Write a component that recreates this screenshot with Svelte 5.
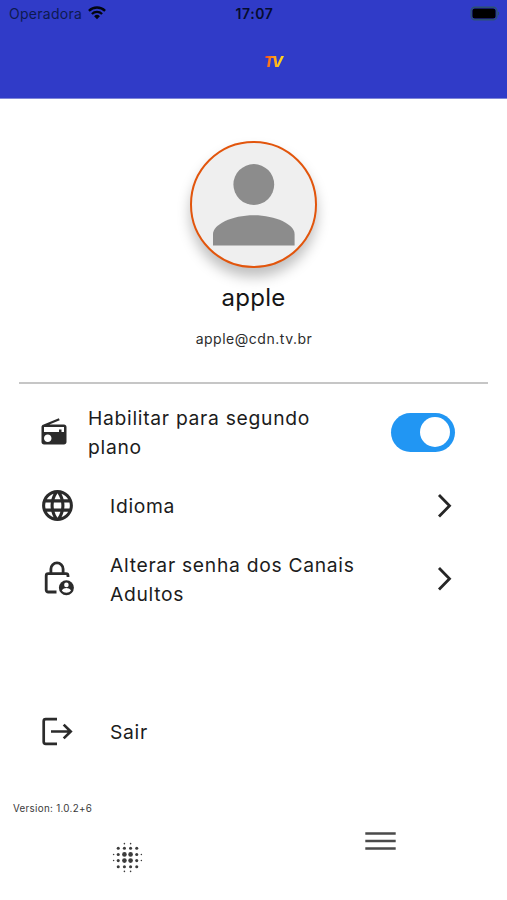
<script>
  let background = true;

  const user = { name: "apple", email: "apple@cdn.tv.br" };

  const dots = [];
  for (const x of [6, 10, 14, 18]) {
    for (const y of [6, 10, 14, 18]) {
      const inner = x > 6 && x < 18 && y > 6 && y < 18;
      dots.push({ x, y, r: inner ? 1.5 : 1 });
    }
  }
  for (const p of [10, 14]) {
    for (const e of [3, 21]) {
      dots.push({ x: p, y: e, r: 0.5 }, { x: e, y: p, r: 0.5 });
    }
  }
</script>

{#snippet chevron()}
  <svg class="chevron" width="18" height="26" viewBox="0 0 18 26">
    <path d="M3 2 13.5 12.8 3 23.6" fill="none" stroke="#262626" stroke-width="2.8" />
  </svg>
{/snippet}

<div class="screen">
  <header>
    <div class="status">
      <div class="carrier">
        <span>Operadora</span>
        <svg width="18" height="14" viewBox="0 0 18 14">
          <g fill="none" stroke="#02050f" stroke-width="2.3">
            <path d="M.9 4.9a11.4 11.4 0 0 1 16.2 0" />
            <path d="M3.9 8a7.2 7.2 0 0 1 10.2 0" />
          </g>
          <path d="M9 13.3 6.1 10.3a4.1 4.1 0 0 1 5.8 0z" fill="#02050f" />
        </svg>
      </div>
      <span class="time">17:07</span>
      <svg class="battery" width="30" height="16" viewBox="0 0 30 16">
        <rect x="1.2" y="1.2" width="25.6" height="12.6" rx="3.6" fill="none" stroke="#2c526f" stroke-width="1.4" />
        <rect x="2.4" y="2.4" width="23.2" height="10.2" rx="2.5" fill="#000" />
        <path d="M28 5.5v4c1.7-.6 1.7-3.4 0-4z" fill="#2c526f" />
      </svg>
    </div>
    <div class="brand">TV</div>
  </header>

  <section class="profile">
    <div class="avatar">
      <svg width="123" height="123" viewBox="0 0 123 123" fill="#8c8c8c">
        <circle cx="61.8" cy="41.5" r="20.4" />
        <path d="M21 102.5V91C21 81.5 39.8 72.2 61.8 72.2s40.8 9.3 40.8 18.8v11.5z" />
      </svg>
    </div>
    <h1>{user.name}</h1>
    <p>{user.email}</p>
  </section>

  <hr />

  <div class="list">
    <div class="row compact">
      <svg class="icon" width="30" height="30" viewBox="0 0 24 24">
        <path d="M3.24 6.15C2.51 6.43 2 7.17 2 8v12c0 1.1.89 2 2 2h16c1.11 0 2-.9 2-2V8c0-1.11-.89-2-2-2H8.3l8.26-3.34L15.88 1 3.24 6.15zM7 20c-1.66 0-3-1.34-3-3s1.34-3 3-3 3 1.34 3 3-1.34 3-3 3zm13-8h-2v-2h-2v2H4V8h16v4z" />
      </svg>
      <span class="label">Habilitar para segundo plano</span>
      <button
        class="switch"
        class:on={background}
        aria-label="Habilitar para segundo plano"
        on:click={() => (background = !background)}
      ></button>
    </div>

    <div class="row">
      <svg class="icon" width="37" height="37" viewBox="0 0 24 24">
        <path d="M11.99 2C6.47 2 2 6.48 2 12s4.47 10 9.99 10C17.52 22 22 17.52 22 12S17.52 2 11.99 2zm6.93 6h-2.95c-.32-1.25-.78-2.45-1.38-3.56 1.84.63 3.37 1.91 4.33 3.56zM12 4.04c.83 1.2 1.48 2.53 1.91 3.96h-3.82c.43-1.43 1.08-2.76 1.91-3.96zM4.26 14C4.1 13.36 4 12.69 4 12s.1-1.36.26-2h3.38c-.08.66-.14 1.32-.14 2s.06 1.34.14 2H4.26zm.82 2h2.95c.32 1.25.78 2.45 1.38 3.56-1.84-.63-3.37-1.9-4.33-3.56zm2.95-8H5.08c.96-1.66 2.49-2.93 4.33-3.56C8.81 5.55 8.35 6.75 8.03 8zM12 19.96c-.83-1.2-1.48-2.53-1.91-3.96h3.82c-.43 1.43-1.08 2.76-1.91 3.96zM14.34 14H9.66c-.09-.66-.16-1.32-.16-2s.07-1.35.16-2h4.68c.09.65.16 1.32.16 2s-.07 1.34-.16 2zm.25 5.56c.6-1.11 1.06-2.31 1.38-3.56h2.95c-.96 1.65-2.49 2.93-4.33 3.56zM16.36 14c.08-.66.14-1.32.14-2s-.06-1.34-.14-2h3.38c.16.64.26 1.31.26 2s-.1 1.36-.26 2h-3.38z" />
      </svg>
      <span class="label">Idioma</span>
      {@render chevron()}
    </div>

    <div class="row">
      <svg class="icon" width="37" height="37" viewBox="0 0 37 37">
        <g fill="none" stroke="#2b2b2b" stroke-width="2.8">
          <path d="M11.9 13.5V9a6.1 6.1 0 0 1 12.2 0v4.5" />
          <path d="M17.5 32H9.2a2 2 0 0 1-2-2V15.7a2 2 0 0 1 2-2H27a2 2 0 0 1 2 2V17" />
        </g>
        <circle cx="27.4" cy="27.8" r="7.5" />
        <circle cx="27.4" cy="24.9" r="2.3" fill="#fff" />
        <path d="M22.8 30.5c1.2-1.7 3-2.4 4.6-2.4s3.4.7 4.6 2.4c-2.2 2.9-7 2.9-9.2 0z" fill="#fff" />
      </svg>
      <span class="label">Alterar senha dos Canais Adultos</span>
      {@render chevron()}
    </div>

    <div class="row logout">
      <svg class="icon" width="37" height="37" viewBox="0 0 37 37">
        <g fill="none" stroke="#2b2b2b" stroke-width="2.7">
          <path d="M18 6.2H6.7a2 2 0 0 0-2 2v20.6a2 2 0 0 0 2 2H18" />
          <path d="M12 18.5h19.5M24.7 11.6l7 6.9-7 6.9" />
        </g>
      </svg>
      <span class="label">Sair</span>
    </div>
  </div>

  <div class="version">Version: 1.0.2+6</div>

  <nav>
    <button aria-label="Canais">
      <svg class="blur" width="37" height="37" viewBox="0 0 24 24" fill="#3c3c3c">
        {#each dots as dot}
          <circle cx={dot.x} cy={dot.y} r={dot.r} />
        {/each}
      </svg>
    </button>
    <button aria-label="Menu">
      <svg class="menu" width="31" height="20" viewBox="0 0 31 20">
        <path d="M.3 2.5h30.4M.3 10h30.4M.3 17.5h30.4" stroke="#4a4a4a" stroke-width="2.7" />
      </svg>
    </button>
  </nav>
</div>

<style>
  :global(body) {
    background: #fff;
  }

  .screen {
    display: flex;
    flex-direction: column;
    height: 900px;
    overflow: hidden;
    color: #1c1c1c;
    font-family: Inter, "Liberation Sans", sans-serif;
  }

  header {
    box-sizing: border-box;
    height: 99px;
    flex: none;
    background: #303bc8;
    border-bottom: 1px solid #7f86d8;
  }

  .status {
    display: grid;
    grid-template-columns: 1fr auto 1fr;
    align-items: center;
    height: 27px;
    padding: 0 7px 0 9px;
    color: #0d1a50;
    font-size: 14px;
  }

  .carrier {
    display: flex;
    align-items: center;
    gap: 6px;
    letter-spacing: 0.28px;
  }

  .carrier svg {
    margin-top: -1px;
  }

  .time {
    color: #050c2e;
    font-weight: 600;
    letter-spacing: 0.55px;
  }

  .battery {
    justify-self: end;
  }

  .brand {
    width: 20px;
    margin: 27px 0 0 264px;
    font-size: 15px;
    font-weight: 800;
    font-style: italic;
    line-height: 16px;
    letter-spacing: -2.5px;
    color: transparent;
    background: linear-gradient(100deg, #f4511e 10%, #ffa31a 50%, #ffd21f 80%);
    background-clip: text;
  }

  .profile {
    display: flex;
    flex-direction: column;
    align-items: center;
    height: 283.4px;
    flex: none;
  }

  .avatar {
    width: 123px;
    height: 123px;
    margin-top: 42.3px;
    border: 2px solid #e2550c;
    border-radius: 50%;
    background: #efefef;
    box-shadow: 0 9px 13px rgba(0, 0, 0, 0.25);
  }

  h1 {
    margin: 15px 0 0;
    color: #161616;
    font-size: 24px;
    font-weight: 400;
    line-height: 29px;
    letter-spacing: 0.3px;
  }

  p {
    margin: 17px 0 0 1px;
    color: #2c2c2c;
    font-size: 14px;
    line-height: 20px;
    letter-spacing: 0.52px;
  }

  hr {
    width: 469px;
    height: 2px;
    flex: none;
    margin: 0 auto;
    border: none;
    background: #c6c6c6;
  }

  .list {
    padding: 11.1px 52.5px 0 39px;
  }

  .row {
    display: flex;
    align-items: center;
    height: 73.4px;
  }

  .icon {
    flex: none;
    margin-right: 34px;
    fill: #2b2b2b;
  }

  .compact .icon {
    margin-right: 19px;
  }

  .label {
    width: 270px;
    padding-top: 2px;
    font-size: 19.3px;
    line-height: 29.3px;
    letter-spacing: 0.7px;
  }

  .compact .label {
    width: 250px;
  }

  .chevron {
    margin: 0 1px 0 auto;
  }

  .logout {
    margin-top: 79.5px;
  }

  .switch {
    width: 64px;
    height: 39px;
    margin-left: auto;
    padding: 4.5px 5px;
    border: none;
    border-radius: 20px;
    background: #bdbdbd;
    display: flex;
    cursor: pointer;
  }

  .switch::after {
    content: "";
    width: 30px;
    height: 30px;
    border-radius: 50%;
    background: #fff;
  }

  .switch.on {
    background: #2196f3;
    justify-content: flex-end;
  }

  .version {
    margin: 33px 0 0 13px;
    color: #3a3a3a;
    font-size: 9.8px;
    line-height: 14px;
    letter-spacing: 0.3px;
  }

  nav {
    display: flex;
    height: 84px;
  }

  nav button {
    flex: 1;
    display: flex;
    justify-content: center;
    align-items: flex-start;
    padding: 0;
    border: none;
    background: none;
    cursor: pointer;
  }

  .blur {
    margin: 23px 0 0 2px;
  }

  .menu {
    margin-top: 15px;
  }
</style>
